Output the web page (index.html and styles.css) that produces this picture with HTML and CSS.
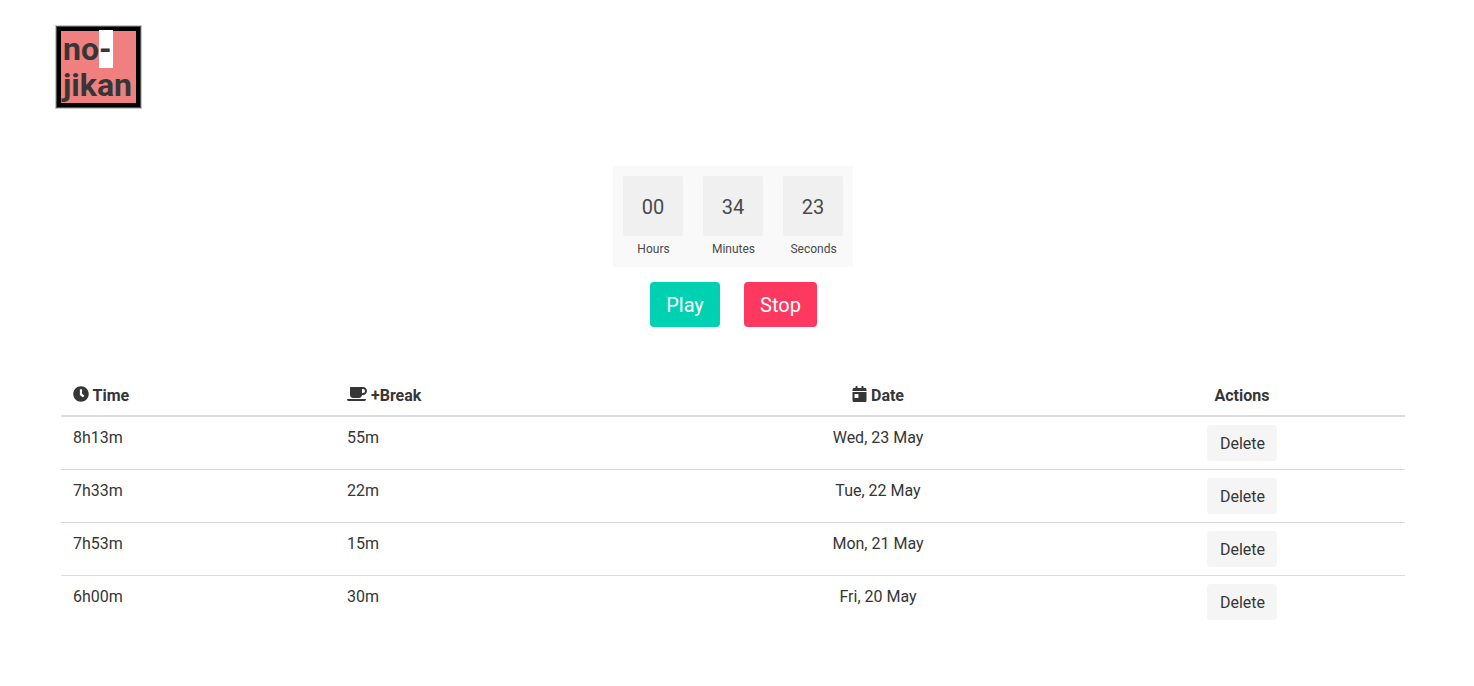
FILE: index.html
```html
<!DOCTYPE html>
<html lang="en">
<head>
<meta charset="utf-8">
<title>no-jikan</title>
<link rel="stylesheet" href="styles.css">
</head>
<body>
<header class="header"><h1 class="logo">no<span class="logo-mark">-</span><br>jikan</h1></header>
<main>
  <section class="timer">
    <div class="clock">
      <div class="unit"><div class="digits">00</div><div class="label">Hours</div></div>
      <div class="unit"><div class="digits">34</div><div class="label">Minutes</div></div>
      <div class="unit"><div class="digits">23</div><div class="label">Seconds</div></div>
    </div>
    <div class="controls">
      <button class="button play">Play</button>
      <button class="button stop">Stop</button>
    </div>
  </section>
  <table class="table">
    <colgroup><col class="col-time"><col class="col-break"><col class="col-date"><col class="col-actions"></colgroup>
    <thead>
      <tr>
        <th><svg class="icon icon-clock" viewBox="0 0 512 512"><path d="M256 8C119 8 8 119 8 256s111 248 248 248 248-111 248-248S393 8 256 8zm57.100 350.100L224.900 294c-3.100-2.300-4.900-5.900-4.900-9.700V116c0-6.600 5.400-12 12-12h48c6.600 0 12 5.400 12 12v137.700l63.500 46.200c5.400 3.900 6.500 11.400 2.600 16.800l-28.200 38.800c-3.900 5.300-11.400 6.500-16.800 2.600z"/></svg> Time</th>
        <th><svg class="icon icon-coffee" viewBox="0 0 640 512"><path d="M192 384h192c53 0 96-43 96-96h32c70.600 0 128-57.400 128-128S582.600 32 512 32H120c-13.300 0-24 10.700-24 24v232c0 53 43 96 96 96zM512 96c35.300 0 64 28.700 64 64s-28.700 64-64 64h-32V96h32zm47.700 384H48.300c-47.600 0-61-64-36-64h583.300c25 0 11.800 64-35.900 64z"/></svg> +Break</th>
        <th class="centered"><svg class="icon icon-calendar" viewBox="0 0 448 512"><path d="M0 464c0 26.500 21.500 48 48 48h352c26.500 0 48-21.500 48-48V192H0v272zm64-192c0-8.800 7.200-16 16-16h96c8.800 0 16 7.200 16 16v96c0 8.800-7.200 16-16 16H80c-8.800 0-16-7.200-16-16v-96zM400 64h-48V16c0-8.800-7.200-16-16-16h-32c-8.800 0-16 7.200-16 16v48H160V16c0-8.800-7.200-16-16-16h-32c-8.800 0-16 7.200-16 16v48H48C21.500 64 0 85.500 0 112v48h448v-48c0-26.500-21.500-48-48-48z"/></svg> Date</th>
        <th class="centered">Actions</th>
      </tr>
    </thead>
    <tbody>
      <tr><td>8h13m</td><td>55m</td><td class="centered">Wed, 23 May</td><td class="action"><button class="button delete">Delete</button></td></tr>
      <tr><td>7h33m</td><td>22m</td><td class="centered">Tue, 22 May</td><td class="action"><button class="button delete">Delete</button></td></tr>
      <tr><td>7h53m</td><td>15m</td><td class="centered">Mon, 21 May</td><td class="action"><button class="button delete">Delete</button></td></tr>
      <tr><td>6h00m</td><td>30m</td><td class="centered">Fri, 20 May</td><td class="action"><button class="button delete">Delete</button></td></tr>
    </tbody>
  </table>
</main>
</body>
</html>
```
FILE: styles.css
```css
* { box-sizing: border-box; }
body {
  margin: 0;
  background: #fff;
  color: #363636;
  font: 16px/24px Roboto, sans-serif;
}
.header { padding: 27px 0 0 57px; height: 166px; }
.logo {
  width: 83px;
  height: 80px;
  margin: 0;
  padding: 0 2px;
  border: 4px solid #000;
  background: #f08080;
  box-shadow: 0 0 0 1px #505050, 0 0 0 2px #c8c8c8;
  font-size: 32px;
  font-weight: 700;
  line-height: 36px;
  white-space: nowrap;
}
.logo-mark { padding-right: 1px; background: #fff; }
.timer {
  display: flex;
  flex-direction: column;
  align-items: center;
  padding-right: 8px;
}
.clock { display: flex; height: 101px; background: #f9f9f9; color: #4a4a4a; }
.unit { width: 80px; padding: 10px; text-align: center; }
.digits {
  height: 60px;
  border-radius: 2px;
  background: #f0f0f0;
  font-size: 20px;
  line-height: 62px;
}
.label { padding-left: 1px; font-size: 12px; line-height: 26px; }
.controls { display: flex; gap: 24px; margin-top: 15px; padding-left: 1px; }
.button {
  border: 1px solid transparent;
  border-radius: 4px;
  font-family: inherit;
}
.play, .stop {
  width: 70px;
  height: 45px;
  padding: 0;
  color: #fff;
  font-size: 20px;
  line-height: 30px;
}
.play { background: #00d1b2; }
.stop { width: 73px; background: #ff3860; }
.delete {
  display: block;
  width: 70px;
  height: 36px;
  margin: 0 auto;
  padding: 2px 0 0 1px;
  background: #f5f5f5;
  color: #363636;
  font-size: 16px;
  line-height: 24px;
}
.table {
  width: 1344px;
  margin: 48px 0 0 61px;
  border-collapse: separate;
  border-spacing: 0;
  table-layout: fixed;
}
.col-time { width: 274px; }
.col-break { width: 342px; }
.col-date { width: 402px; }
.col-actions { width: 326px; }
th, td {
  padding: 9px 12px 7px;
  border-bottom: 1px solid #dbdbdb;
  text-align: left;
  vertical-align: top;
}
th { border-bottom-width: 2px; font-weight: 700; }
.action { padding: 8px 12px; }
tbody tr:last-child td { border-bottom: 0; }
.centered { text-align: center; }
.icon { height: 16px; vertical-align: -1px; fill: currentColor; }
.icon-clock { width: 16px; }
.icon-coffee { width: 20px; }
.icon-calendar { width: 15px; }
```
